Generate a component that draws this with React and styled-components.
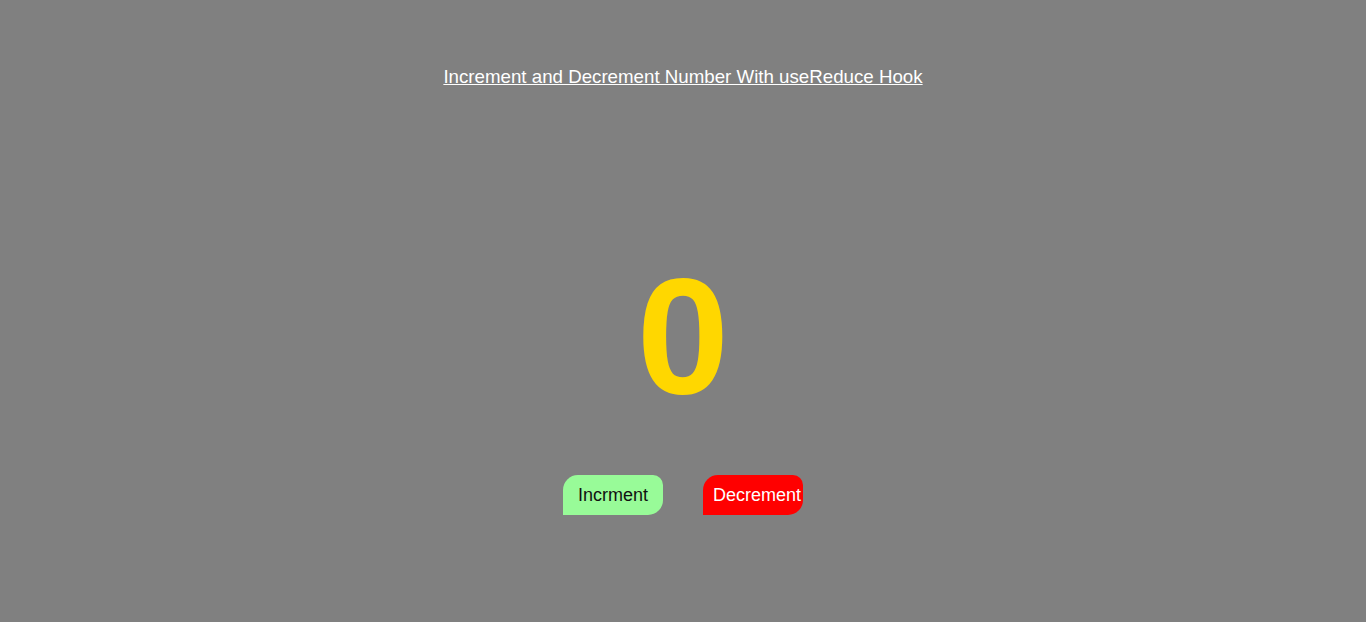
import React, { useReducer } from 'react';
import styled, { createGlobalStyle } from 'styled-components';

const GlobalStyle = createGlobalStyle`
  html, body {
    margin: 0;
    padding: 0;
    background-color: grey;
    font-family: 'Liberation Sans', Arial, sans-serif;
  }
`;

const reducer = (state, action) => {
  if (action.type === 'INCREMENT') return state + 1;
  if (action.type === 'DECREMENT') return state - 1;
  return state;
};

const App = () => {
  const [count, dispatch] = useReducer(reducer, 0);

  return (
    <Wrapper>
      <GlobalStyle />
      <Title>Increment and Decrement Number With useReduce Hook</Title>
      <Count>{count}</Count>
      <Buttons>
        <Button $bg="palegreen" $color="#111" onClick={() => dispatch({ type: 'INCREMENT' })}>
          Incrment
        </Button>
        <Button $bg="red" $color="white" onClick={() => dispatch({ type: 'DECREMENT' })}>
          Decrement
        </Button>
      </Buttons>
    </Wrapper>
  );
};

const Wrapper = styled.div`
  min-height: 622px;
  background-color: grey;
  display: flex;
  flex-direction: column;
  align-items: center;
  padding-top: 66px;
  box-sizing: border-box;
`;

const Title = styled.h3`
  margin: 0;
  color: white;
  font-size: 18.72px;
  font-weight: normal;
  line-height: 21px;
  text-decoration: underline;
`;

const Count = styled.h1`
  margin: 146px 0 0;
  color: gold;
  font-size: 166px;
  line-height: 206px;
  font-weight: bold;
`;

const Buttons = styled.div`
  display: flex;
  gap: 40px;
  margin-top: 36px;
`;

const Button = styled.button`
  width: 100px;
  height: 40px;
  border: none;
  padding: 0 10px;
  border-radius: 15px 10px 15px 0;
  background-color: ${(p) => p.$bg};
  color: ${(p) => p.$color};
  font-family: 'Liberation Sans', Arial, sans-serif;
  font-size: 18px;
  text-align: center;
  cursor: pointer;
`;

export default App;
